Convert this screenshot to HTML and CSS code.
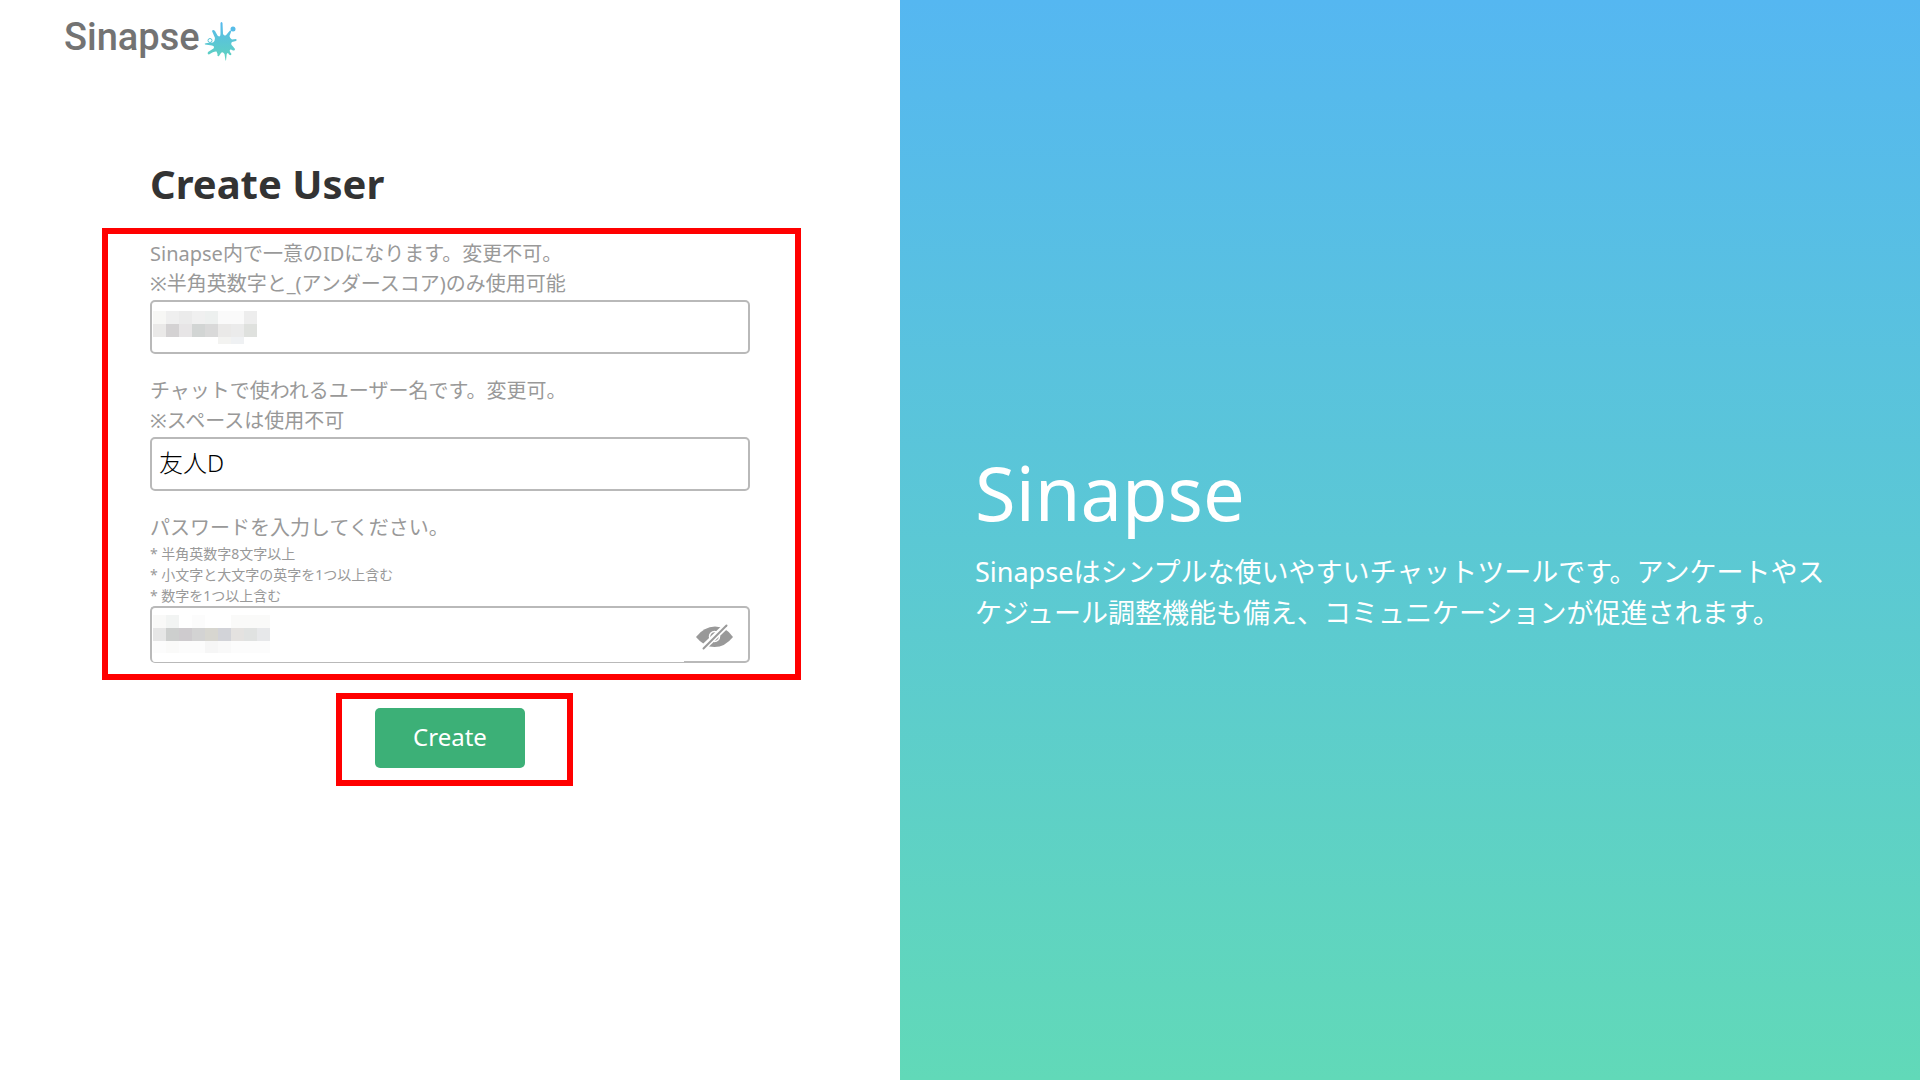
FILE: index.html
```html
<!DOCTYPE html>
<html lang="ja">
<head>
  <meta charset="UTF-8">
  <meta name="viewport" content="width=device-width, initial-scale=1.0">
  <title>Sinapse - Create User</title>
  <link rel="stylesheet" href="styles.css">
</head>
<body>
  <main class="left">
    <header class="logo">
      <a href="#">Sinapse
        <svg class="splash" viewBox="0 0 34 42" aria-hidden="true">
          <defs>
            <linearGradient id="ink" x1="0" y1="0" x2="0" y2="1">
              <stop offset="0" stop-color="#56b9ee"/>
              <stop offset="1" stop-color="#5fd3bd"/>
            </linearGradient>
          </defs>
          <path fill="url(#ink)" d="M16.500 3Q17.500 1 18.500 3L19 14Q21 17 23 14L26 10.500Q28 10 27 12L25.500 16Q26 19 28 19.500L32 19Q33.500 20 32 21L28 22Q26 24 29 26.500L31 29Q31 31 29 30.500L27 29.500Q25 29 26 32L27.500 34Q27 36 25 34.500L24 33Q22.500 33 22.500 36L22 40.500L21.500 40.500L20.500 34Q18.500 31 17 33L15 36Q13 37 13.500 34L12.500 31.500Q10 31 5 34.500Q3 34 4 32L9.500 28.500Q11 26 8 25.500L1 24.500Q0 23 3 23L9 22.500Q11 21 11 18L8 11Q9 9 11 11L13.500 15.500Q16.500 18 16.500 14Z"/>
          <circle cx="29" cy="9" r="2.500" fill="#56bce8"/>
          <circle cx="6" cy="20.500" r="2" fill="none" stroke="#5ac5d7"/>
        </svg>
      </a>
    </header>

    <form class="create">
      <h1>Create User</h1>

      <div class="fields">
        <div class="field">
          <label for="userId">Sinapse内で一意のIDになります。変更不可。<br>※半角英数字と_(アンダースコア)のみ使用可能</label>
          <input type="text" id="userId">
          <svg class="mosaic" width="104" height="33" shape-rendering="crispEdges" aria-hidden="true">
            <path fill="#f7f7f5" d="M0 0h13v13H0z"/>
            <path fill="#efefef" d="M13 0h13v13H13z"/>
            <path fill="#ebebeb" d="M26 0h13v13H26zM78 13h13v13H78z"/>
            <path fill="#f0f0f0" d="M39 0h13v13H39z"/>
            <path fill="#edf0ef" d="M52 0h13v13H52z"/>
            <path fill="#fafafa" d="M65 0h26v13H65z"/>
            <path fill="#ededed" d="M91 0h13v13H91z"/>
            <path fill="#eae9e8" d="M0 13h13v13H0zM65 13h13v13H65z"/>
            <path fill="#d4d2d3" d="M13 13h13v13H13z"/>
            <path fill="#e7e5e6" d="M26 13h13v13H26z"/>
            <path fill="#d2d5d4" d="M39 13h13v13H39z"/>
            <path fill="#d9d9d9" d="M52 13h13v13H52z"/>
            <path fill="#dfe1de" d="M91 13h13v13H91z"/>
            <path fill="#f3f3f1" d="M65 26h13v7H65z"/>
            <path fill="#eff1f3" d="M78 26h13v7H78z"/>
          </svg>
        </div>

        <div class="field">
          <label for="userName">チャットで使われるユーザー名です。変更可。<br>※スペースは使用不可</label>
          <input type="text" id="userName" value="友人D">
        </div>

        <div class="field">
          <label for="password">パスワードを入力してください。</label>
          <p class="rules">* 半角英数字8文字以上<br>* 小文字と大文字の英字を1つ以上含む<br>* 数字を1つ以上含む</p>
          <div class="password">
            <input type="password" id="password">
            <button type="button" class="toggle" aria-label="パスワードを表示">
              <svg viewBox="0 0 38 26" aria-hidden="true">
                <path fill="#999" d="M0 13Q8 2.500 19 2.500T37 13Q29 23 18.500 23T0 13z"/>
                <circle cx="18.500" cy="12.500" r="5" fill="none" stroke="#fff" stroke-width="1.500"/>
                <path stroke="#fff" stroke-width="6" d="M5 26L33 -1"/>
                <path stroke="#999" stroke-width="2" stroke-linecap="round" d="M7.500 24.500L30.500 1.500"/>
              </svg>
            </button>
          </div>
          <svg class="mosaic" width="117" height="38" shape-rendering="crispEdges" aria-hidden="true">
            <path fill="#f9f9f8" d="M0 0h13v13H0z"/>
            <path fill="#f2f4f3" d="M13 0h13v13H13z"/>
            <path fill="#fcfcfc" d="M39 0h13v13H39zM0 26h13v12H0zM26 26h26v12H26zM78 26h39v12H78z"/>
            <path fill="#fafaf9" d="M78 0h39v13H78zM13 26h13v12H13z"/>
            <path fill="#e6e6e6" d="M0 13h13v13H0z"/>
            <path fill="#cdcfce" d="M13 13h13v13H13z"/>
            <path fill="#cecbce" d="M26 13h13v13H26z"/>
            <path fill="#d3d3d3" d="M39 13h13v13H39z"/>
            <path fill="#d7d6d0" d="M52 13h13v13H52z"/>
            <path fill="#d2d3d8" d="M65 13h13v13H65z"/>
            <path fill="#e4e2e0" d="M78 13h13v13H78z"/>
            <path fill="#e0e2e1" d="M91 13h13v13H91z"/>
            <path fill="#e7e8ea" d="M104 13h13v13h-13z"/>
            <path fill="#f6f6f6" d="M52 26h13v12H52z"/>
            <path fill="#f9f9f9" d="M65 26h13v12H65z"/>
          </svg>
        </div>
      </div>

      <div class="submit">
        <button type="submit" class="btn">Create</button>
      </div>
    </form>
  </main>

  <section class="right">
    <h2>Sinapse</h2>
    <p>Sinapseはシンプルな使いやすいチャットツールです。アンケートやスケジュール調整機能も備え、コミュニケーションが促進されます。</p>
  </section>
</body>
</html>
```
FILE: styles.css
```css
* { margin: 0; padding: 0; box-sizing: border-box; }
body {
  display: flex;
  min-height: 100vh;
  font-family: "Noto Sans", "Noto Sans CJK JP", sans-serif;
  background: #fff;
  color: #333;
}
.left {
  flex: 0 0 46.875%;
}
.logo {
  padding: 12px 64px;
}
.logo a {
  display: flex;
  align-items: flex-end;
  gap: 4px;
  font-family: Roboto, sans-serif;
  font-size: 38px;
  line-height: 50px;
  font-weight: 500;
  color: #737373;
  text-decoration: none;
}
.splash {
  width: 34px;
  height: 42px;
}

/* form */
.create {
  padding: 82px 99px 0 102px;
}
h1 {
  margin: 0 0 16px 48px;
  font-size: 40px;
  line-height: 56px;
}
.fields {
  padding: 5px 45px 11px 42px;
  border: 6px solid #f00;
}
.field {
  position: relative;
  margin-bottom: 22px;
}
.field:last-child {
  margin-bottom: 0;
}
.field label {
  display: block;
  font-size: 20px;
  line-height: 30px;
  color: #999;
}
.rules {
  font-size: 14px;
  line-height: 21px;
  color: #999;
}
.field input {
  display: block;
  width: 100%;
  height: 54px;
  margin-top: 1px;
  padding: 0 7px 5px;
  border: 2px solid #b9b9b9;
  border-radius: 5px;
  background: #fff;
  font-family: inherit;
  font-size: 24px;
  font-weight: 300;
  color: #000;
}
.password {
  display: flex;
}
.field .password input {
  flex: 1;
  height: 57px;
  margin-top: 0;
  border-right: 0;
  border-bottom-width: 1px;
  border-radius: 5px 0 0 5px;
}
.toggle {
  width: 66px;
  height: 57px;
  padding: 4px 16px 0 12px;
  border: 2px solid #b9b9b9;
  border-left: 0;
  border-radius: 0 5px 5px 0;
  background: #fff;
  cursor: pointer;
}
.toggle svg {
  display: block;
  width: 38px;
  height: 26px;
}
.mosaic {
  position: absolute;
  left: 3px;
  bottom: 10px;
}
.submit {
  width: 237px;
  margin: 13px 0 0 234px;
  padding: 9px 42px 12px 33px;
  border: 6px solid #f00;
}
.btn {
  display: block;
  width: 150px;
  height: 60px;
  padding-bottom: 4px;
  border: 0;
  border-radius: 5px;
  background: #3cb077;
  color: #fff;
  font-family: inherit;
  font-size: 24px;
  cursor: pointer;
}

/* intro */
.right {
  flex: 1;
  display: flex;
  flex-direction: column;
  justify-content: center;
  padding: 0 75px 6px;
  background: linear-gradient(#55b7f1, #61d9b8);
  color: #fff;
}
.right h2 {
  margin-bottom: 6px;
  font-size: 74px;
  line-height: 104px;
  font-weight: 400;
}
.right p {
  font-size: 27px;
  line-height: 41px;
}
```
